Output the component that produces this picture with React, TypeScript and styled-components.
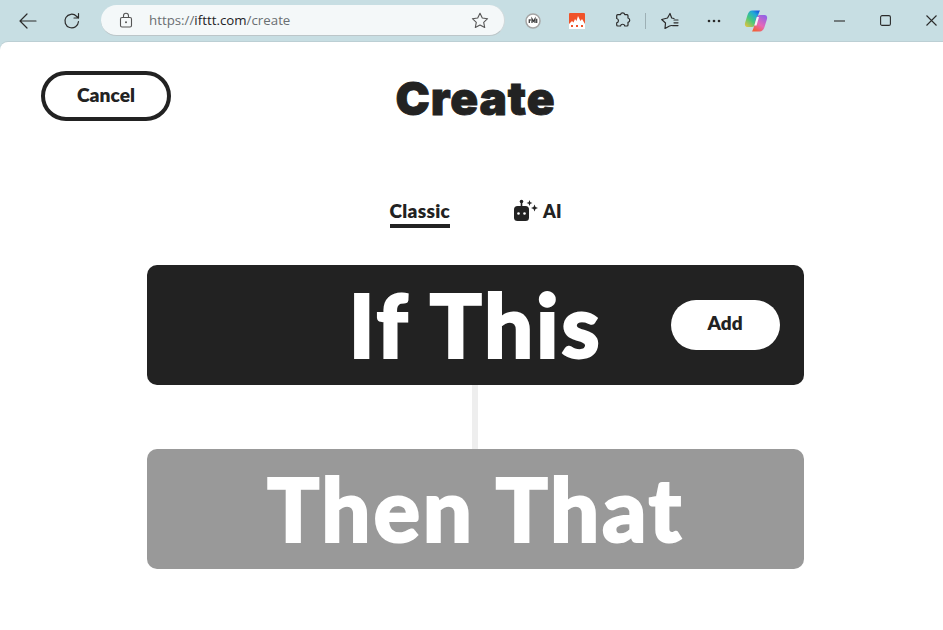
import React from "react";
import styled, { createGlobalStyle } from "styled-components";

const Global = createGlobalStyle`
  html, body { margin: 0; padding: 0; height: 100%; background: #c7dee3; overflow: hidden; }
  #root { height: 100%; }
  * { box-sizing: border-box; }
`;

const Window = styled.div`
  width: 943px;
  height: 630px;
  display: flex;
  flex-direction: column;
  background: #c7dee3;
  overflow: hidden;
`;

const Toolbar = styled.div`
  height: 42px;
  flex: none;
  display: flex;
  align-items: center;
  padding-bottom: 1px;
`;

const IconSlot = styled.div<{ $w: number }>`
  width: ${(p) => p.$w}px;
  height: 30px;
  flex: none;
  display: flex;
  align-items: center;
  justify-content: center;
  color: #2b2b2b;
`;

const AddressBar = styled.div`
  width: 404px;
  height: 31px;
  flex: none;
  margin: 0 8px 0 0;
  display: flex;
  align-items: center;
  background: #f4f8f9;
  border-radius: 16px;
  border-bottom: 1px solid #bcc6c9;
  border-right: 1px solid #d0d8da;
  padding: 0 15px 0 18px;
`;

const UrlText = styled.div`
  flex: 1;
  margin-left: 16px;
  font: 400 13.3px "Open Sans", sans-serif;
  color: #6a6f72;
  white-space: nowrap;
`;

const UrlHost = styled.span`
  color: #1e2326;
`;

const Separator = styled.div`
  width: 1px;
  height: 16px;
  flex: none;
  background: #9db0b5;
`;

const Page = styled.main`
  flex: 1;
  background: #fff;
  border-top-left-radius: 8px;
  box-shadow: 0 -1px 0 #bccfd4;
  display: flex;
  flex-direction: column;
  align-items: center;
  padding-left: 8px;
  color: #222;
`;

const Header = styled.header`
  align-self: stretch;
  height: 132px;
  flex: none;
  display: grid;
  grid-template-columns: 1fr auto 1fr;
  padding-top: 29px;
`;

const CancelButton = styled.button`
  width: 130px;
  height: 50px;
  margin-left: 33px;
  justify-self: start;
  border: 4px solid #222;
  border-radius: 25px;
  background: #fff;
  color: #222;
  font: 800 19.2px Lato, sans-serif;
  padding: 0 0 3px;
`;

const Title = styled.h1`
  margin: 0;
  font: 900 46px/54px Inter, sans-serif;
  color: #222;
  letter-spacing: 0.9px;
  -webkit-text-stroke: 0.9px #222;
`;

const Tabs = styled.nav`
  display: flex;
  gap: 64px;
  margin-top: 20px;
  flex: none;
  margin-bottom: 37px;
`;

const Tab = styled.div<{ $active?: boolean }>`
  height: 34px;
  padding-top: 3px;
  display: flex;
  align-items: center;
  gap: 5px;
  font: 800 ${(p) => (p.$active ? "19px" : "18px")} Lato, sans-serif;
  letter-spacing: ${(p) => (p.$active ? "0.3px" : "0")};
  border-bottom: 4px solid ${(p) => (p.$active ? "#222" : "transparent")};
`;

const Card = styled.section<{ $bg: string }>`
  position: relative;
  width: 657px;
  height: 120px;
  flex: none;
  background: ${(p) => p.$bg};
  border-radius: 10px;
  display: flex;
  align-items: center;
  justify-content: center;
  color: #fff;
  font: 900 87px/120px Lato, sans-serif;
  letter-spacing: 2.7px;
  -webkit-text-stroke: 2px #fff;
`;

const AddButton = styled.button`
  position: absolute;
  top: 35px;
  right: 24px;
  width: 109px;
  height: 50px;
  border: 0;
  border-radius: 25px;
  background: #fff;
  color: #222;
  font: 800 19px Lato, sans-serif;
  letter-spacing: 0;
  -webkit-text-stroke: 0;
  padding: 0 1px 5px 0;
`;

const Connector = styled.div`
  width: 6px;
  height: 64px;
  margin-right: 1px;
  flex: none;
  background: #eee;
`;

const stroke = { fill: "none", stroke: "currentColor", strokeWidth: 1.2, strokeLinecap: "round" as const, strokeLinejoin: "round" as const };

export default function App() {
  return (
    <Window>
      <Global />
      <Toolbar>
        <IconSlot $w={56}>
          <svg width="18" height="16" viewBox="0 0 18 16" {...stroke}>
            <path d="M1 8h16M8 1 1 8l7 7" />
          </svg>
        </IconSlot>
        <IconSlot $w={32}>
          <svg width="18" height="18" viewBox="0 0 18 18" {...stroke}>
            <path d="M15.500 9.500a6.800 6.800 0 1 1-2-5.300L15.500 6M15.500 1.500V6H11" />
          </svg>
        </IconSlot>
        <IconSlot $w={13} />
        <AddressBar>
          <svg width="14" height="16" viewBox="0 0 14 16" fill="none" stroke="#555" strokeWidth="1.100">
            <rect x="1.500" y="5.500" width="11" height="9.500" rx="1.500" />
            <path d="M4.500 5.500V3.800a2.500 2.500 0 0 1 5 0v1.700" />
            <circle cx="7" cy="10.200" r="1" fill="#555" stroke="none" />
          </svg>
          <UrlText>
            https://<UrlHost>ifttt.com</UrlHost>/create
          </UrlText>
          <svg width="18" height="17" viewBox="0 0 18 17" fill="none" stroke="#555" strokeWidth="1.100" strokeLinejoin="round">
            <path d="M9 1.200 11.300 6l5.300.7-3.900 3.600 1 5.200L9 13l-4.700 2.500 1-5.200L1.400 6.700 6.700 6z" />
          </svg>
        </AddressBar>
        <IconSlot $w={40}>
          <svg width="16" height="16" viewBox="0 0 16 16">
            <circle cx="8" cy="8" r="7" fill="#fff" stroke="#a5a5a5" strokeWidth="1.500" />
            <path d="M4.300 10V7h1.500M7 10V5.800l1.500 2.500L10 5.800V10M11.700 5.800V10" fill="none" stroke="#444" strokeWidth="1.300" />
          </svg>
        </IconSlot>
        <IconSlot $w={48}>
          <svg width="16" height="16" viewBox="0 0 16 16">
            <rect width="16" height="16" rx="1" fill="#f0532a" />
            <path d="M0 16v-5l3-3 1.500 1.500L6 6l1.500 2L9 3l2.500 5L13 6l3 5v5z" fill="#fff" />
            <path d="M2 12h2v2H2zM7 12h2v2H7zM12 12h2v2h-2z" fill="#f0532a" />
          </svg>
        </IconSlot>
        <IconSlot $w={42}>
          <svg width="17" height="17" viewBox="0 0 17 17" {...stroke}>
            <path d="M6.500 2.700a2.200 2.200 0 0 1 4.300 0h2.200a1 1 0 0 1 1 1v2.300a2.200 2.200 0 0 1 0 4.300v2.700a1 1 0 0 1-1 1h-2.200a2.200 2.200 0 0 0-4.300 0H3.700a1 1 0 0 1-1-1v-2.200a2.200 2.200 0 0 0 0-4.300V3.700a1 1 0 0 1 1-1z" />
          </svg>
        </IconSlot>
        <IconSlot $w={2} />
        <Separator />
        <IconSlot $w={48}>
          <svg width="18" height="18" viewBox="0 0 18 18" {...stroke}>
            <path d="M9 1.500 10.700 6l2.300.500M9 1.500 6.500 6 .7 7.500l3.800 3.500-.5 5.500 4.500-2.500 2 -.5M13 8h4M13 10.800h4M11.500 13.600H17" />
          </svg>
        </IconSlot>
        <IconSlot $w={40}>
          <svg width="14" height="4" viewBox="0 0 14 4">
            <circle cx="2" cy="2" r="1.300" fill="currentColor" />
            <circle cx="7" cy="2" r="1.300" fill="currentColor" />
            <circle cx="12" cy="2" r="1.300" fill="currentColor" />
          </svg>
        </IconSlot>
        <IconSlot $w={44}>
          <svg width="24" height="24" viewBox="0 0 24 24">
            <defs>
              <linearGradient id="cpA" x1="0" y1="1" x2="0.800" y2="0">
                <stop offset="0" stopColor="#f5c13a" />
                <stop offset="0.450" stopColor="#49c97a" />
                <stop offset="0.800" stopColor="#1fa8d8" />
                <stop offset="1" stopColor="#1a5fe0" />
              </linearGradient>
              <linearGradient id="cpB" x1="0.300" y1="1" x2="0.900" y2="0">
                <stop offset="0" stopColor="#f2603c" />
                <stop offset="0.400" stopColor="#e668b8" />
                <stop offset="1" stopColor="#8a62ea" />
              </linearGradient>
            </defs>
            <path d="M8 1.500h8c-.5 1-1 2-1.500 3.500L11.500 15c-.5 2-1.800 3-3.500 3H3.500C1.300 18 .5 16 1 14L3.500 6C4.300 3.300 5.800 1.500 8 1.500z" fill="url(#cpA)" />
            <path d="M16 22.500H8c.5-1 1-2 1.500-3.500L12.500 9c.5-2 1.800-3 3.500-3h4.500c2.200 0 3 2 2.500 4L20.500 18c-.8 2.700-2.300 4.500-4.500 4.500z" fill="url(#cpB)" />
            <path d="M12.800 8h2.200l-2.500 8.500h-2.200z" fill="#f4f6f6" />
          </svg>
        </IconSlot>
        <IconSlot $w={38} />
        <IconSlot $w={46}>
          <svg width="11" height="2" viewBox="0 0 11 2"><path d="M0 1h11" stroke="currentColor" strokeWidth="1.100" /></svg>
        </IconSlot>
        <IconSlot $w={46}>
          <svg width="11" height="11" viewBox="0 0 11 11"><rect x=".6" y=".6" width="9.800" height="9.800" rx="1.500" fill="none" stroke="currentColor" strokeWidth="1.100" /></svg>
        </IconSlot>
        <IconSlot $w={46}>
          <svg width="11" height="11" viewBox="0 0 11 11"><path d="M.5.500l10 10M10.500.500l-10 10" stroke="currentColor" strokeWidth="1.100" /></svg>
        </IconSlot>
      </Toolbar>
      <Page>
        <Header>
          <CancelButton>Cancel</CancelButton>
          <Title>Create</Title>
        </Header>
        <Tabs>
          <Tab $active>Classic</Tab>
          <Tab>
            <svg width="24" height="24" viewBox="0 0 24 24" fill="#222">
              <rect x="0" y="7" width="15" height="15" rx="3.500" />
              <rect x="6.700" y="2" width="1.600" height="6" />
              <circle cx="7.500" cy="2.500" r="1.800" />
              <circle cx="4.500" cy="14.500" r="1.300" fill="#fff" />
              <circle cx="10.500" cy="14.500" r="1.300" fill="#fff" />
              <path d="M15.500 1l.8 2.200 2.200.8-2.200.8-.8 2.200-.8-2.200-2.200-.8 2.200-.8zM20.500 5.500l1 2.500 2.500 1-2.500 1-1 2.500-1-2.500-2.500-1 2.500-1z" />
            </svg>
            AI
          </Tab>
        </Tabs>
        <Card $bg="#222">
          If This
          <AddButton>Add</AddButton>
        </Card>
        <Connector />
        <Card $bg="#999">Then That</Card>
      </Page>
    </Window>
  );
}
